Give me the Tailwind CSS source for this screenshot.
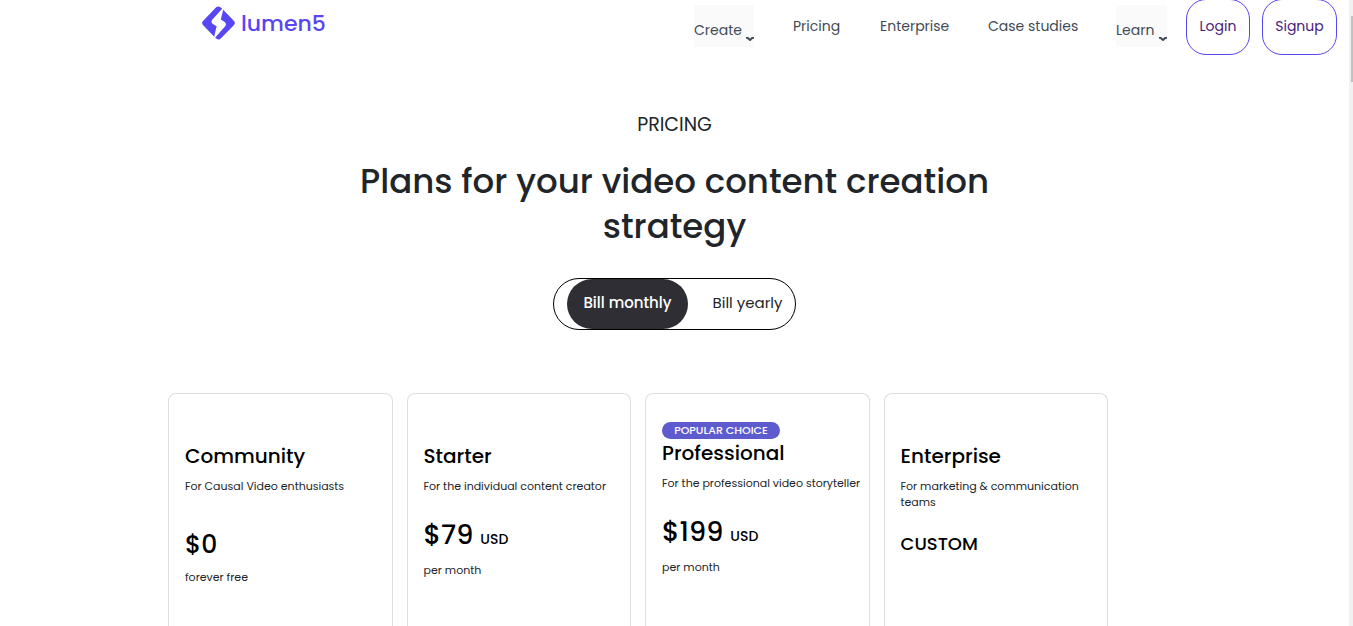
<!DOCTYPE html>
<html lang="en">
<head>
<meta charset="utf-8">
<meta name="viewport" content="width=device-width, initial-scale=1">
<title>Pricing - Lumen5</title>
<script src="https://cdn.jsdelivr.net/npm/@tailwindcss/browser@4"></script>
</head>
<body class="flex h-screen overflow-hidden bg-white font-[Poppins,Inter,sans-serif] text-[#212529]">
<div class="flex min-w-0 flex-1 flex-col">
  <header class="flex h-14 shrink-0 items-start pr-3 pl-[202px]">
    <a href="#" aria-label="lumen5" class="mt-1.5 flex items-center gap-1.5 text-[#5846f5]">
      <svg class="h-[34px] w-[33px]" viewBox="0 0 33 34" fill="currentColor" aria-hidden="true">
        <path d="M14.2 1.2Q16.5-.4 18.7 1.4L20.2 2.8 10.2 13.8Q8.2 16.6 11.6 18.5L14.6 20.2 12.2 30.7 1.2 19.2Q-.9 17 1.2 14.8Z"/>
        <path d="M21.2 3.8 31.8 14.8Q33.9 17 31.8 19.2L19 32.3Q16.5 34.7 14 32.3L13.2 31.5 23.2 20.3Q25 17.2 22 15.4L18.8 13.6Z"/>
      </svg>
      <span class="pt-px text-[22px] leading-8 font-medium">lumen5</span>
    </a>
    <nav class="ml-auto flex items-start text-sm leading-6 text-[#414b57]" aria-label="Main">
      <button type="button" class="mt-[5px] mr-[39px] flex h-[42px] w-[60px] items-center justify-between bg-[#fafafa] pt-2">Create
        <svg class="mt-[18px] h-1 w-2" viewBox="0 0 8 4" fill="none" stroke="currentColor" stroke-width="2" aria-hidden="true"><path d="M0 .7H1.5L4 3 6.5 .7H8"/></svg>
      </button>
      <a href="#" class="mt-3.5 w-[87px]">Pricing</a>
      <a href="#" class="mt-3.5 w-[108px]">Enterprise</a>
      <a href="#" class="mt-3.5 w-32">Case studies</a>
      <button type="button" class="mt-[5px] mr-[19px] flex h-[42px] w-[51px] items-center justify-between bg-[#fafafa] pt-2">Learn
        <svg class="mt-[18px] h-1 w-2" viewBox="0 0 8 4" fill="none" stroke="currentColor" stroke-width="2" aria-hidden="true"><path d="M0 .7H1.5L4 3 6.5 .7H8"/></svg>
      </button>
      <a href="#" class="mr-3 -mt-px flex h-14 w-16 items-center justify-center rounded-[20px] border border-[#5846f5] pb-0.5 text-[#4b1a80]">Login</a>
      <a href="#" class="-mt-px flex h-14 w-[75px] items-center justify-center rounded-[20px] border border-[#5846f5] pb-0.5 text-[#4b1a80]">Signup</a>
    </nav>
  </header>

  <main class="flex min-h-0 flex-1 flex-col">
    <section class="flex flex-col items-center pt-14 text-center">
      <p class="text-[19px] leading-[26px]">PRICING</p>
      <h1 class="mt-[21px] max-w-[700px] text-[34px] leading-[45px] font-medium">Plans for your video content creation strategy</h1>
      <div class="mt-[29px] flex h-[52px] w-[243px] items-stretch rounded-full border border-black pl-[13px] text-[15px]">
        <button type="button" aria-pressed="true" class="w-[121px] rounded-full bg-[#302e35] pb-0.5 font-medium text-white">Bill monthly</button>
        <button type="button" aria-pressed="false" class="flex-1 pb-0.5 pl-3">Bill yearly</button>
      </div>
    </section>

    <section class="mt-[63px] ml-[168px] grid min-h-0 w-full max-w-[940px] flex-1 grid-cols-4 gap-3.5 text-[11px] leading-4" aria-label="Plans">
      <article class="rounded-t-lg border border-b-0 border-[#dfdfdf] px-4 pt-[50px]">
        <h2 class="text-xl leading-6 font-medium text-black">Community</h2>
        <p class="mt-2.5">For Causal Video enthusiasts</p>
        <p class="mt-[33px] text-[25px] leading-9 font-medium text-black">$0</p>
        <p class="mt-1.5">forever free</p>
      </article>
      <article class="rounded-t-lg border border-b-0 border-[#dfdfdf] px-4 pt-[50px]">
        <h2 class="text-xl leading-6 font-medium text-black">Starter</h2>
        <p class="mt-2.5">For the individual content creator</p>
        <p class="mt-[23px] text-[27px] leading-9 font-medium text-black">$79 <span class="text-sm">USD</span></p>
        <p class="mt-[9px]">per month</p>
      </article>
      <article class="rounded-t-lg border border-b-0 border-[#dfdfdf] px-4 pt-7">
        <p class="flex h-[17px] w-[118px] items-center justify-center rounded-full bg-[#5e5bcf] pb-px font-medium text-white">POPULAR CHOICE</p>
        <h2 class="mt-0.5 text-xl leading-6 font-medium text-black">Professional</h2>
        <p class="mt-2.5 whitespace-nowrap">For the professional video storyteller</p>
        <p class="mt-[23px] text-[27px] leading-9 font-medium text-black">$199 <span class="text-sm">USD</span></p>
        <p class="mt-[9px]">per month</p>
      </article>
      <article class="rounded-t-lg border border-b-0 border-[#dfdfdf] px-4 pt-[50px]">
        <h2 class="text-xl leading-6 font-medium text-black">Enterprise</h2>
        <p class="mt-2.5">For marketing &amp; communication teams</p>
        <p class="mt-4 text-lg leading-9 font-medium text-black">CUSTOM</p>
      </article>
    </section>
  </main>
</div>
<div class="w-1 shrink-0 bg-[#f1f1f1] pt-4 pl-0.5" aria-hidden="true"><div class="h-[66px] bg-[#c1c1c1]"></div></div>
</body>
</html>
